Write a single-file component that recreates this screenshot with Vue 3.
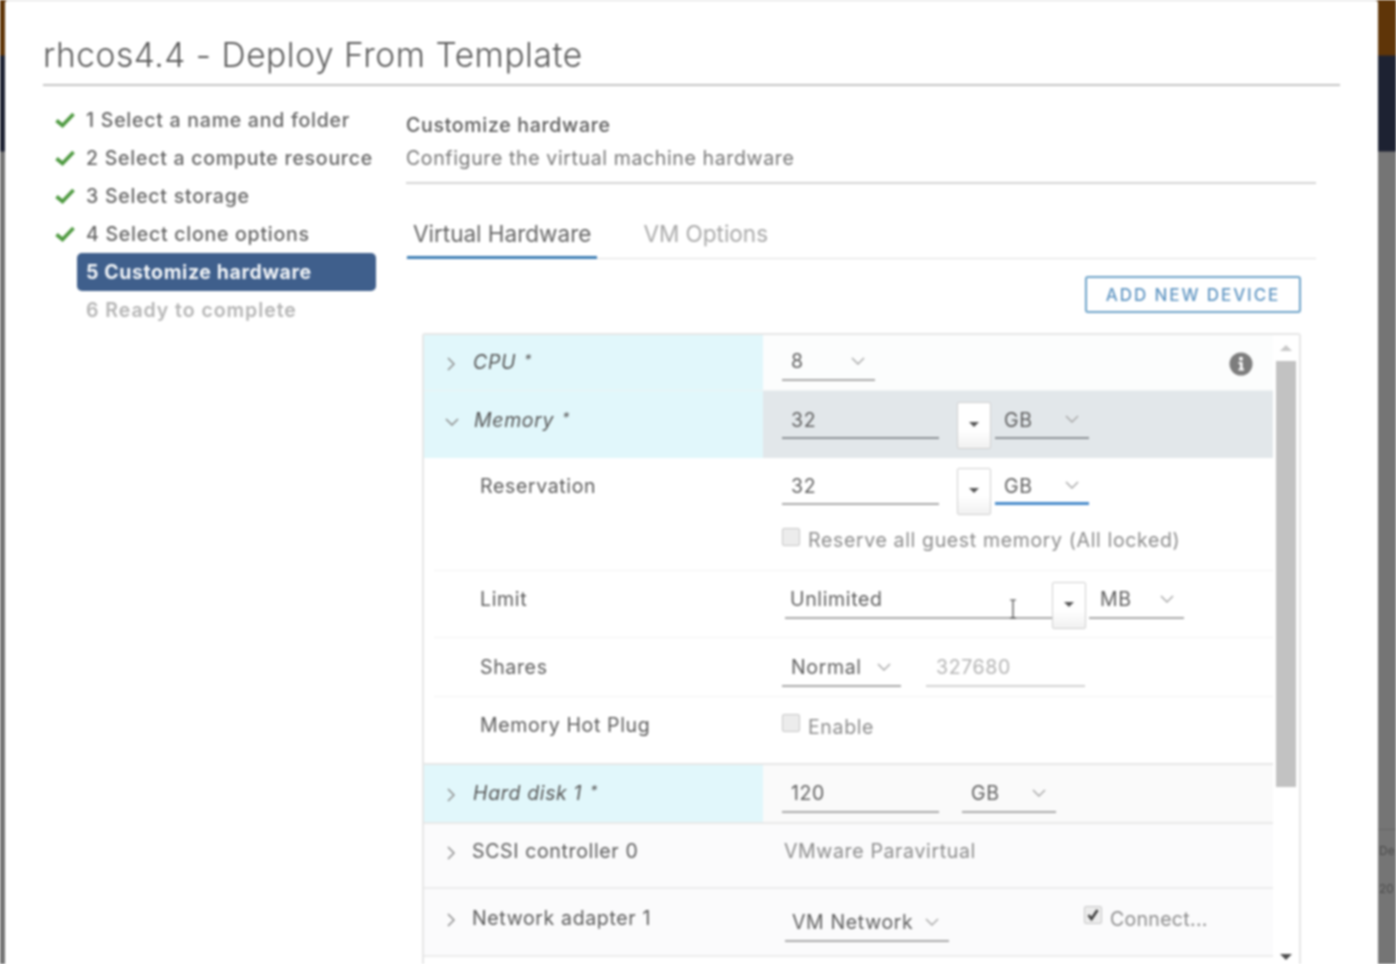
<template>
  <div class="page">
    <div class="behind">
      <span class="behind_line"></span>
      <span class="behind_text">De</span>
      <span class="behind_text">20</span>
    </div>
    <div class="dialog">
      <h1 class="title">rhcos4.4 - Deploy From Template</h1>
      <div class="body">
        <ul class="steps">
          <li v-for="step in steps" :key="step.text" class="step">
            <span class="step_icon">
              <svg v-if="step.done" width="20" height="16" viewBox="0 0 20 16">
                <path d="M1.5 8.5 L7.5 13.5 L18.5 2" fill="none" stroke="#4f9a41" stroke-width="3.6" />
              </svg>
            </span>
            <span class="step_label" :class="{ active: step.active, todo: step.todo }">{{ step.text }}</span>
          </li>
        </ul>
        <div class="content">
          <div class="page_title">Customize hardware</div>
          <div class="page_sub">Configure the virtual machine hardware</div>
          <div class="tabs">
            <div class="tab tab_on">Virtual Hardware</div>
            <div class="tab">VM Options</div>
          </div>
          <div class="actions">
            <button class="add_btn" type="button">ADD NEW DEVICE</button>
          </div>
          <div class="table">
            <div class="rows">
              <div class="row row_cpu hl">
                <div class="name"><svg class="chev_r" viewBox="0 0 8 14"><path d="M1 1 L7 7 L1 13" /></svg><i>CPU <span class="star">*</span></i></div>
                <div class="val val_cpu">
                  <div class="field w93"><span>8</span><svg class="chev" viewBox="0 0 14 8"><path d="M1 1 L7 7 L13 1" /></svg></div>
                  <svg class="info" width="24" height="24" viewBox="0 0 24 24">
                    <circle cx="12" cy="12" r="11.5" fill="#7d7d7d" />
                    <circle cx="12" cy="6.8" r="2" fill="#fff" />
                    <path d="M9.5 10 H13.6 V16.6 H15 V18.6 H9.5 V16.6 H11 V12 H9.5 Z" fill="#fff" />
                  </svg>
                </div>
              </div>

              <div class="row row_mem hl">
                <div class="name"><svg class="chev_d" viewBox="0 0 14 8"><path d="M1 1 L7 7 L13 1" /></svg><i>Memory <span class="star">*</span></i></div>
                <div class="val val_mem">
                  <div class="field w157 dark"><span>32</span></div>
                  <button class="spin ml18" type="button"><b></b></button>
                  <div class="field w94 ml4 dark"><span>GB</span><svg class="chev" viewBox="0 0 14 8"><path d="M1 1 L7 7 L13 1" /></svg></div>
                </div>
              </div>

              <div class="row row_res sub">
                <div class="name name_sub">Reservation</div>
                <div class="val val_res">
                  <div class="res_top">
                    <div class="field w157"><span>32</span></div>
                    <button class="spin ml18" type="button"><b></b></button>
                    <div class="field w94 ml4 focus"><span>GB</span><svg class="chev" viewBox="0 0 14 8"><path d="M1 1 L7 7 L13 1" /></svg></div>
                  </div>
                  <label class="check check_res"><span class="box"></span>Reserve all guest memory (All locked)</label>
                </div>
              </div>

              <div class="row row_limit sub">
                <div class="name name_sub">Limit</div>
                <div class="val val_limit">
                  <div class="field w267 tight"><span>Unlimited</span>
                    <svg class="ibeam" width="10" height="20" viewBox="0 0 10 20"><path d="M2 1 H8 M5 1 V19 M2 19 H8" fill="none" stroke="#444" stroke-width="1.2" /></svg>
                  </div>
                  <button class="spin" type="button"><b></b></button>
                  <div class="field w95 ml3 mb"><span>MB</span><svg class="chev" viewBox="0 0 14 8"><path d="M1 1 L7 7 L13 1" /></svg></div>
                </div>
              </div>

              <div class="row row_shares sub">
                <div class="name name_sub">Shares</div>
                <div class="val val_shares">
                  <div class="field w119"><span>Normal</span><svg class="chev" viewBox="0 0 14 8"><path d="M1 1 L7 7 L13 1" /></svg></div>
                  <div class="field w159 ml25 off"><span>327680</span></div>
                </div>
              </div>

              <div class="row row_plug">
                <div class="name name_sub">Memory Hot Plug</div>
                <div class="val val_plug">
                  <label class="check"><span class="box"></span>Enable</label>
                </div>
              </div>

              <div class="row row_disk hl">
                <div class="name"><svg class="chev_r" viewBox="0 0 8 14"><path d="M1 1 L7 7 L1 13" /></svg><i>Hard disk 1 <span class="star">*</span></i></div>
                <div class="val val_disk">
                  <div class="field w157"><span>120</span></div>
                  <div class="field w94 ml23"><span>GB</span><svg class="chev" viewBox="0 0 14 8"><path d="M1 1 L7 7 L13 1" /></svg></div>
                </div>
              </div>

              <div class="row row_scsi">
                <div class="name"><svg class="chev_r" viewBox="0 0 8 14"><path d="M1 1 L7 7 L1 13" /></svg>SCSI controller 0</div>
                <div class="val val_scsi">VMware Paravirtual</div>
              </div>

              <div class="row row_net">
                <div class="name"><svg class="chev_r" viewBox="0 0 8 14"><path d="M1 1 L7 7 L1 13" /></svg>Network adapter 1</div>
                <div class="val val_net">
                  <div class="field w164"><span>VM Network</span><svg class="chev" viewBox="0 0 14 8"><path d="M1 1 L7 7 L13 1" /></svg></div>
                  <label class="check check_net">
                    <span class="box"><svg width="14" height="14" viewBox="0 0 14 14"><path d="M2.5 7 L5.5 11 L11.5 2" fill="none" stroke="#3f3f3f" stroke-width="2.6" /></svg></span>Connect...
                  </label>
                </div>
              </div>
            </div>
            <div class="scroll">
              <span class="arrow_up"></span>
              <div class="thumb"></div>
              <span class="arrow_down"></span>
            </div>
          </div>
        </div>
      </div>
    </div>
  </div>
</template>

<script setup>
const steps = [
  { text: '1 Select a name and folder', done: true },
  { text: '2 Select a compute resource', done: true },
  { text: '3 Select storage', done: true },
  { text: '4 Select clone options', done: true },
  { text: '5 Customize hardware', active: true },
  { text: '6 Ready to complete', todo: true }
]
</script>

<style>
html,
body {
  margin: 0;
  overflow: hidden;
}
</style>

<style scoped>
.page {
  position: relative;
  width: 1396px;
  height: 964px;
  box-sizing: border-box;
  padding: 0 18px 0 5px;
  overflow: hidden;
  background: linear-gradient(#5f3508 0, #5f3508 55px, #1d2232 56px, #1d2232 151px, #757575 152px);
  font-family: Inter, "Open Sans", sans-serif;
  color: #5c5c5c;
  filter: blur(0.8px);
}

/* the page behind the dialog, only a sliver of it shows on the right */
.behind {
  position: absolute;
  top: 829px;
  left: 1378px;
  width: 18px;
  color: #4c4c4c;
  font-size: 12px;
  line-height: 38px;
  white-space: nowrap;
}

.behind_line {
  display: block;
  height: 1px;
  background: #666;
  margin-bottom: 2px;
}

.behind_text {
  display: block;
  margin-left: 1px;
}

.dialog {
  position: relative;
  height: 964px;
  box-sizing: border-box;
  padding: 0 38px;
  background: #fff;
  border-top: 1px solid #dcdcdc;
  border-radius: 3px 3px 0 0;
  overflow: hidden;
}

.title {
  margin: 0;
  height: 85px;
  box-sizing: border-box;
  padding-top: 33px;
  border-bottom: 2px solid #c4c4c4;
  font-size: 33.5px;
  line-height: 42px;
  font-weight: 300;
  letter-spacing: 0.55px;
  color: #5a5a5a;
}

.body {
  display: flex;
  padding-top: 15px;
}

.steps {
  width: 363px;
  flex: none;
  box-sizing: border-box;
  margin: 0;
  padding: 0 0 0 12px;
  list-style: none;
}

.step {
  display: flex;
  align-items: center;
  height: 38px;
}

.step_icon {
  width: 22px;
  flex: none;
  display: flex;
}

.step_label {
  width: 299px;
  height: 38px;
  box-sizing: border-box;
  padding-left: 9px;
  border-radius: 5px;
  font-size: 19.5px;
  line-height: 38px;
  font-weight: 500;
  letter-spacing: 0.75px;
  color: #666;
  white-space: nowrap;
}

.step_label.active {
  background: #3f5f8c;
  color: #f2f5f8;
  font-weight: 700;
  letter-spacing: 0.6px;
}

.step_label.todo {
  color: #b5b5b5;
  font-weight: 600;
  letter-spacing: 0.95px;
}

.content {
  width: 910px;
  flex: none;
}

.page_title {
  margin-top: 13px;
  font-size: 19.5px;
  line-height: 22px;
  font-weight: 500;
  letter-spacing: 0.7px;
  color: #5c5c5c;
}

.page_sub {
  margin-top: 11px;
  padding-bottom: 13px;
  border-bottom: 2px solid #d4d4d4;
  font-size: 19.5px;
  line-height: 22px;
  letter-spacing: 0.63px;
  color: #777;
}

.tabs {
  display: flex;
  height: 75px;
  box-sizing: border-box;
  padding-left: 1px;
  align-items: flex-end;
  border-bottom: 1px solid #dedede;
}

.tab {
  height: 50px;
  box-sizing: border-box;
  padding: 10px 6px 0;
  margin-right: 40px;
  font-size: 22.5px;
  line-height: 30px;
  color: #a9a9a9;
  margin-bottom: -1px;
}

.tab_on {
  color: #666;
  border-bottom: 3px solid #3f7fb5;
}

.actions {
  display: flex;
  justify-content: flex-end;
  padding: 17px 15px 0 0;
}

.add_btn {
  width: 216px;
  height: 37px;
  padding: 0;
  background: #fff;
  border: 2px solid #6ea3c9;
  border-radius: 3px;
  font-family: inherit;
  font-size: 17px;
  font-weight: 500;
  letter-spacing: 1.9px;
  color: #5f95c2;
}

.table {
  display: flex;
  width: 879px;
  height: 660px;
  box-sizing: border-box;
  margin: 20px 0 0 16px;
  border: 2px solid #e6e6e6;
  border-bottom: none;
  border-radius: 3px 3px 0 0;
}

.rows {
  width: 849px;
  flex: none;
}

.row {
  display: grid;
  grid-template-columns: 339px 1fr;
  box-sizing: border-box;
  font-size: 19.5px;
  letter-spacing: 0.65px;
}

.row_cpu { height: 56px; border-bottom: 1px solid #eef2f3; }
.row_mem { height: 67px; }
.row_res { height: 113px; }
.row_limit { height: 67px; }
.row_shares { height: 59px; }
.row_plug { height: 68px; border-bottom: 2px solid #e6e6e6; }
.row_disk { height: 59px; border-bottom: 2px solid #e8e8e8; }
.row_scsi { height: 65px; border-bottom: 2px solid #ececec; background: #fbfbfc; }
.row_net { height: 68px; border-bottom: 2px solid #ececec; background: #fbfbfc; }

.sub {
  position: relative;
}

.sub::after {
  content: "";
  position: absolute;
  left: 10px;
  right: 0;
  bottom: 0;
  border-bottom: 1px solid #f2f2f2;
}

.name {
  display: flex;
  align-items: flex-start;
  padding: 15px 0 0 23px;
  line-height: 24px;
  color: #5c5c5c;
  box-sizing: border-box;
}

.row_mem .name { padding-top: 17px; }
.row_res .name { padding-top: 16px; }
.row_limit .name { padding-top: 16px; }
.row_shares .name { padding-top: 17px; }
.row_plug .name { padding-top: 16px; }
.row_disk .name { padding-top: 16px; }
.row_net .name { padding-top: 17px; }

.name svg {
  flex: none;
  fill: none;
  stroke: #8c8c8c;
  stroke-width: 1.5;
}

.chev_r {
  width: 8px;
  height: 14px;
  margin: 7px 17px 0 0;
}

.chev_d {
  width: 14px;
  height: 8px;
  margin: 10px 14px 0 -2px;
}

.name i {
  color: #565656;
  margin-left: 1px;
}

.star {
  font-size: 14px;
  line-height: 0;
  vertical-align: 4px;
  margin-left: 2px;
}

.hl .name {
  background: #e1f7fb;
}

.name_sub {
  padding-left: 56px;
}

.val {
  display: flex;
  align-items: flex-start;
  padding-left: 19px;
  background: #fff;
}

.row_scsi .val,
.row_net .val {
  background: transparent;
}

.val_cpu { background: #fcfdfd; }
.val_mem { background: #e2e7ea; padding-top: 11px; }
.val_res { display: block; padding-top: 10px; }
.val_limit { padding: 11px 0 0 22px; }
.val_shares { padding-top: 12px; }
.val_plug { padding-top: 17px; }
.val_disk { background: #fafafa; }

.res_top {
  display: flex;
  align-items: flex-start;
}

.field {
  position: relative;
  height: 37px;
  box-sizing: border-box;
  padding: 6px 0 0 9px;
  border-bottom: 2px solid #a9a9a9;
  line-height: 24px;
  color: #5f5f5f;
  flex: none;
}

.val_cpu .field { margin-top: 9px; padding-top: 5px; }
.val_disk .field { margin-top: 11px; padding-top: 5px; }
.val_shares .field { padding-top: 5px; }
.val_net .field { margin-top: 16px; padding: 5px 0 0 7px; }

.dark { border-bottom-color: #8d9296; }
.focus { border-bottom-color: #4a8ccb; border-bottom-width: 3px; }
.off { color: #b4b4b4; border-bottom-color: #d2d2d2; padding-left: 10px; }
.tight { padding: 5px 0 0 5px; }
.mb { padding: 5px 0 0 11px; }

.w93 { width: 93px; }
.w94 { width: 94px; }
.w95 { width: 95px; }
.w119 { width: 119px; }
.w157 { width: 157px; }
.w159 { width: 159px; }
.w164 { width: 164px; }
.w267 { width: 267px; }
.ml3 { margin-left: 3px; }
.ml4 { margin-left: 4px; }
.ml18 { margin-left: 18px; }
.ml23 { margin-left: 23px; }
.ml25 { margin-left: 25px; }

.chev {
  position: absolute;
  right: 10px;
  top: 13px;
  width: 14px;
  height: 8px;
  fill: none;
  stroke: #a5a5a5;
  stroke-width: 1.4;
}

.ibeam {
  position: absolute;
  left: 223px;
  top: 17px;
}

.spin {
  display: flex;
  align-items: center;
  justify-content: center;
  width: 34px;
  height: 47px;
  flex: none;
  padding: 0;
  background: linear-gradient(#fff 60%, #f1f1f1);
  border: 1px solid #cfcfcf;
  border-radius: 2px;
}

.spin b {
  display: block;
  margin-top: -2px;
  border-top: 5px solid #555;
  border-left: 5px solid transparent;
  border-right: 5px solid transparent;
}

.info {
  margin: 17px 20px 0 auto;
}

.check {
  display: flex;
  align-items: flex-start;
  line-height: 24px;
  color: #8c8c8c;
}

.check_res {
  margin-top: 13px;
}

.box {
  display: flex;
  align-items: center;
  justify-content: center;
  width: 18px;
  height: 18px;
  box-sizing: border-box;
  margin-right: 8px;
  background: #ececec;
  border: 1px solid #c6c6c6;
  border-radius: 2px;
  flex: none;
}

.val_plug .check {
  line-height: 26px;
}

.check_net {
  margin: 18px 0 0 135px;
  letter-spacing: 0.3px;
}

.check_net .box {
  margin-top: -1px;
}

.val_scsi {
  padding: 15px 0 0 21px;
  line-height: 24px;
  color: #8c8c8c;
}

.val_net {
  padding-left: 22px;
}

.scroll {
  position: relative;
  flex: 1;
  background: #fff;
}

.thumb {
  position: absolute;
  top: 26px;
  left: 3px;
  width: 20px;
  height: 426px;
  background: #c2c2c2;
}

.arrow_up,
.arrow_down {
  position: absolute;
  left: 7px;
  border-left: 6px solid transparent;
  border-right: 6px solid transparent;
}

.arrow_up {
  top: 10px;
  border-bottom: 6px solid #c8c8c8;
}

.arrow_down {
  top: 619px;
  border-top: 6px solid #4d4d4d;
}
</style>
